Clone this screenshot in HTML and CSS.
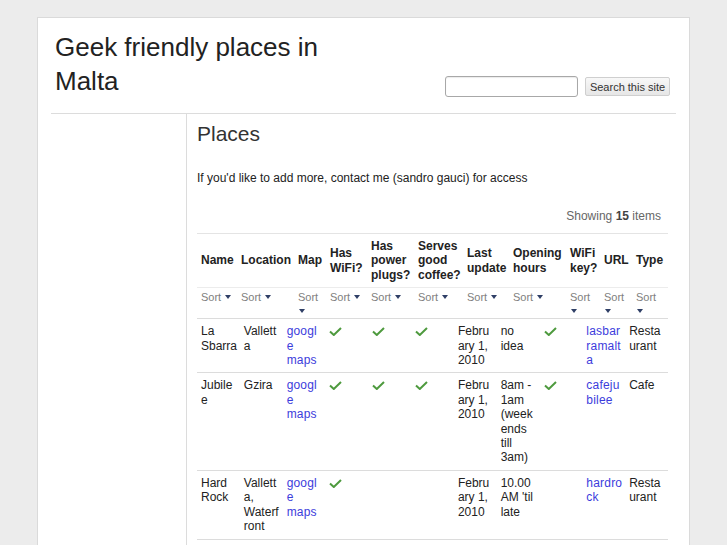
FILE: index.html
```html
<!DOCTYPE html>
<html lang="en">
<head>
<meta charset="utf-8">
<title>Places - Geek friendly places in Malta</title>
<link rel="stylesheet" href="styles.css">
</head>
<body>
<div class="page">
  <header class="site-header">
    <h1 class="site-title">Geek friendly places in Malta</h1>
    <form class="search">
      <input class="search-input" type="text">
      <button class="search-btn" type="button">Search this site</button>
    </form>
  </header>
  <div class="main">
    <aside class="sidebar"></aside>
    <section class="content">
      <h2 class="page-title">Places</h2>
      <p class="intro">If you'd like to add more, contact me (sandro gauci) for access</p>
      <div class="count">Showing <b>15</b> items</div>

      <table class="list-head">
        <colgroup>
          <col class="w40"><col class="w57"><col class="w32"><col class="w41"><col class="w47"><col class="w49"><col class="w46"><col class="w57"><col class="w34"><col class="w32"><col class="w36">
        </colgroup>
        <tr class="head-row">
          <th>Name</th><th>Location</th><th>Map</th><th>Has WiFi?</th><th>Has power plugs?</th><th>Serves good coffee?</th><th>Last update</th><th>Opening hours</th><th>WiFi key?</th><th>URL</th><th>Type</th>
        </tr>
        <tr class="sort-row">
          <td>Sort <span class="arrow"></span></td>
          <td>Sort <span class="arrow"></span></td>
          <td>Sort <span class="arrow"></span></td>
          <td>Sort <span class="arrow"></span></td>
          <td>Sort <span class="arrow"></span></td>
          <td>Sort <span class="arrow"></span></td>
          <td>Sort <span class="arrow"></span></td>
          <td>Sort <span class="arrow"></span></td>
          <td>Sort <span class="arrow"></span></td>
          <td>Sort <span class="arrow"></span></td>
          <td>Sort <span class="arrow"></span></td>
        </tr>
      </table>

      <table class="list-body">
        <tr>
          <td>La Sbarra</td>
          <td>Valletta</td>
          <td><a href="#">google maps</a></td>
          <td><svg class="check" viewBox="0 0 13 9"><polyline points="1,4.5 4.8,8 12,1"/></svg></td>
          <td><svg class="check" viewBox="0 0 13 9"><polyline points="1,4.5 4.8,8 12,1"/></svg></td>
          <td><svg class="check" viewBox="0 0 13 9"><polyline points="1,4.5 4.8,8 12,1"/></svg></td>
          <td>February 1, 2010</td>
          <td>no idea</td>
          <td><svg class="check" viewBox="0 0 13 9"><polyline points="1,4.5 4.8,8 12,1"/></svg></td>
          <td><a href="#">lasbarramalta</a></td>
          <td>Restaurant</td>
        </tr>
        <tr>
          <td>Jubilee</td>
          <td>Gzira</td>
          <td><a href="#">google maps</a></td>
          <td><svg class="check" viewBox="0 0 13 9"><polyline points="1,4.5 4.8,8 12,1"/></svg></td>
          <td><svg class="check" viewBox="0 0 13 9"><polyline points="1,4.5 4.8,8 12,1"/></svg></td>
          <td><svg class="check" viewBox="0 0 13 9"><polyline points="1,4.5 4.8,8 12,1"/></svg></td>
          <td>February 1, 2010</td>
          <td>8am - 1am (weekends till 3am)</td>
          <td><svg class="check" viewBox="0 0 13 9"><polyline points="1,4.5 4.8,8 12,1"/></svg></td>
          <td><a href="#">cafejubilee</a></td>
          <td>Cafe</td>
        </tr>
        <tr>
          <td>Hard Rock</td>
          <td>Valletta, Waterfront</td>
          <td><a href="#">google maps</a></td>
          <td><svg class="check" viewBox="0 0 13 9"><polyline points="1,4.5 4.8,8 12,1"/></svg></td>
          <td></td>
          <td></td>
          <td>February 1, 2010</td>
          <td>10.00 AM 'til late</td>
          <td></td>
          <td><a href="#">hardrock</a></td>
          <td>Restaurant</td>
        </tr>
      </table>
    </section>
  </div>
</div>
</body>
</html>
```

FILE: styles.css
```css
html, body {
  margin: 0;
  padding: 0;
}
body {
  background: #ececec;
  font-family: "Liberation Sans", Arial, sans-serif;
  font-size: 12px;
  color: #222;
}
.page {
  width: 625px;
  margin: 17px auto 0;
  background: #fff;
  border: 1px solid #dadada;
  padding: 0 13px;
  box-sizing: content-box;
  min-height: 600px;
}
.site-header {
  display: flex;
  justify-content: space-between;
  align-items: flex-end;
  padding: 12px 6px 15px 4px;
  border-bottom: 1px solid #dcdcdc;
}
.site-title {
  width: 300px;
  margin: 0;
  font-size: 26px;
  line-height: 34px;
  font-weight: normal;
  color: #222;
}
.search {
  display: flex;
  align-items: center;
  gap: 7px;
  margin: 0 0 1px;
}
.search-input {
  width: 133px;
  height: 21px;
  box-sizing: border-box;
  border: 1px solid #a8a8a8;
  border-radius: 3px;
  box-shadow: inset 0 1px 1px rgba(0,0,0,.08);
  margin: 0;
  padding: 0 4px;
}
.search-btn {
  height: 19px;
  width: 85px;
  box-sizing: border-box;
  padding: 0;
  margin: 0;
  border: 1px solid #cfcfcf;
  border-radius: 2px;
  background: linear-gradient(#f8f8f8, #e6e6e6);
  font-family: "Liberation Sans", Arial, sans-serif;
  font-size: 11px;
  color: #333;
}
.main {
  display: flex;
}
.sidebar {
  width: 135px;
  flex: none;
  border-right: 1px solid #dcdcdc;
  min-height: 480px;
}
.content {
  flex: 1;
  padding: 7px 8px 20px 10px;
}
.page-title {
  margin: 0;
  font-size: 21px;
  line-height: 26px;
  font-weight: normal;
  color: #333;
}
.intro {
  margin: 24px 0 0;
  line-height: 15px;
}
.count {
  margin-top: 23px;
  line-height: 15px;
  text-align: right;
  padding-right: 7px;
  color: #666;
}
.count b {
  color: #444;
}
.list-head,
.list-body {
  width: 471px;
  table-layout: fixed;
  border-collapse: collapse;
}
.list-head {
  margin-top: 9px;
  border-top: 1px solid #e4e4e4;
}
.w32 { width: 32px; }
.w34 { width: 34px; }
.w36 { width: 36px; }
.w40 { width: 40px; }
.w41 { width: 41px; }
.w46 { width: 46px; }
.w47 { width: 47px; }
.w49 { width: 49px; }
.w57 { width: 57px; }
.head-row th {
  text-align: left;
  vertical-align: middle;
  font-weight: bold;
  line-height: 14.4px;
  padding: 5px 0 5px 4px;
  color: #222;
}
.sort-row td {
  border-top: 1px solid #ececec;
  vertical-align: top;
  font-size: 11px;
  line-height: 14px;
  padding: 2px 2px 0 4px;
  color: #808080;
}
.arrow {
  display: inline-block;
  width: 0;
  height: 0;
  margin-left: 1px;
  border-left: 3.5px solid transparent;
  border-right: 3.5px solid transparent;
  border-top: 4px solid #2f3f66;
  vertical-align: 2px;
}
.list-body td {
  border-top: 1px solid #dcdcdc;
  border-bottom: 1px solid #dcdcdc;
  vertical-align: top;
  line-height: 14.4px;
  padding: 5px 2px 5px 4px;
  overflow-wrap: anywhere;
  color: #222;
}
.list-body a {
  color: #3c3cdc;
  text-decoration: none;
  letter-spacing: 0.2px;
}
.check {
  display: block;
  width: 13px;
  height: 9px;
  margin-top: 3px;
  fill: none;
  stroke: #4e9a3e;
  stroke-width: 2;
}
```
